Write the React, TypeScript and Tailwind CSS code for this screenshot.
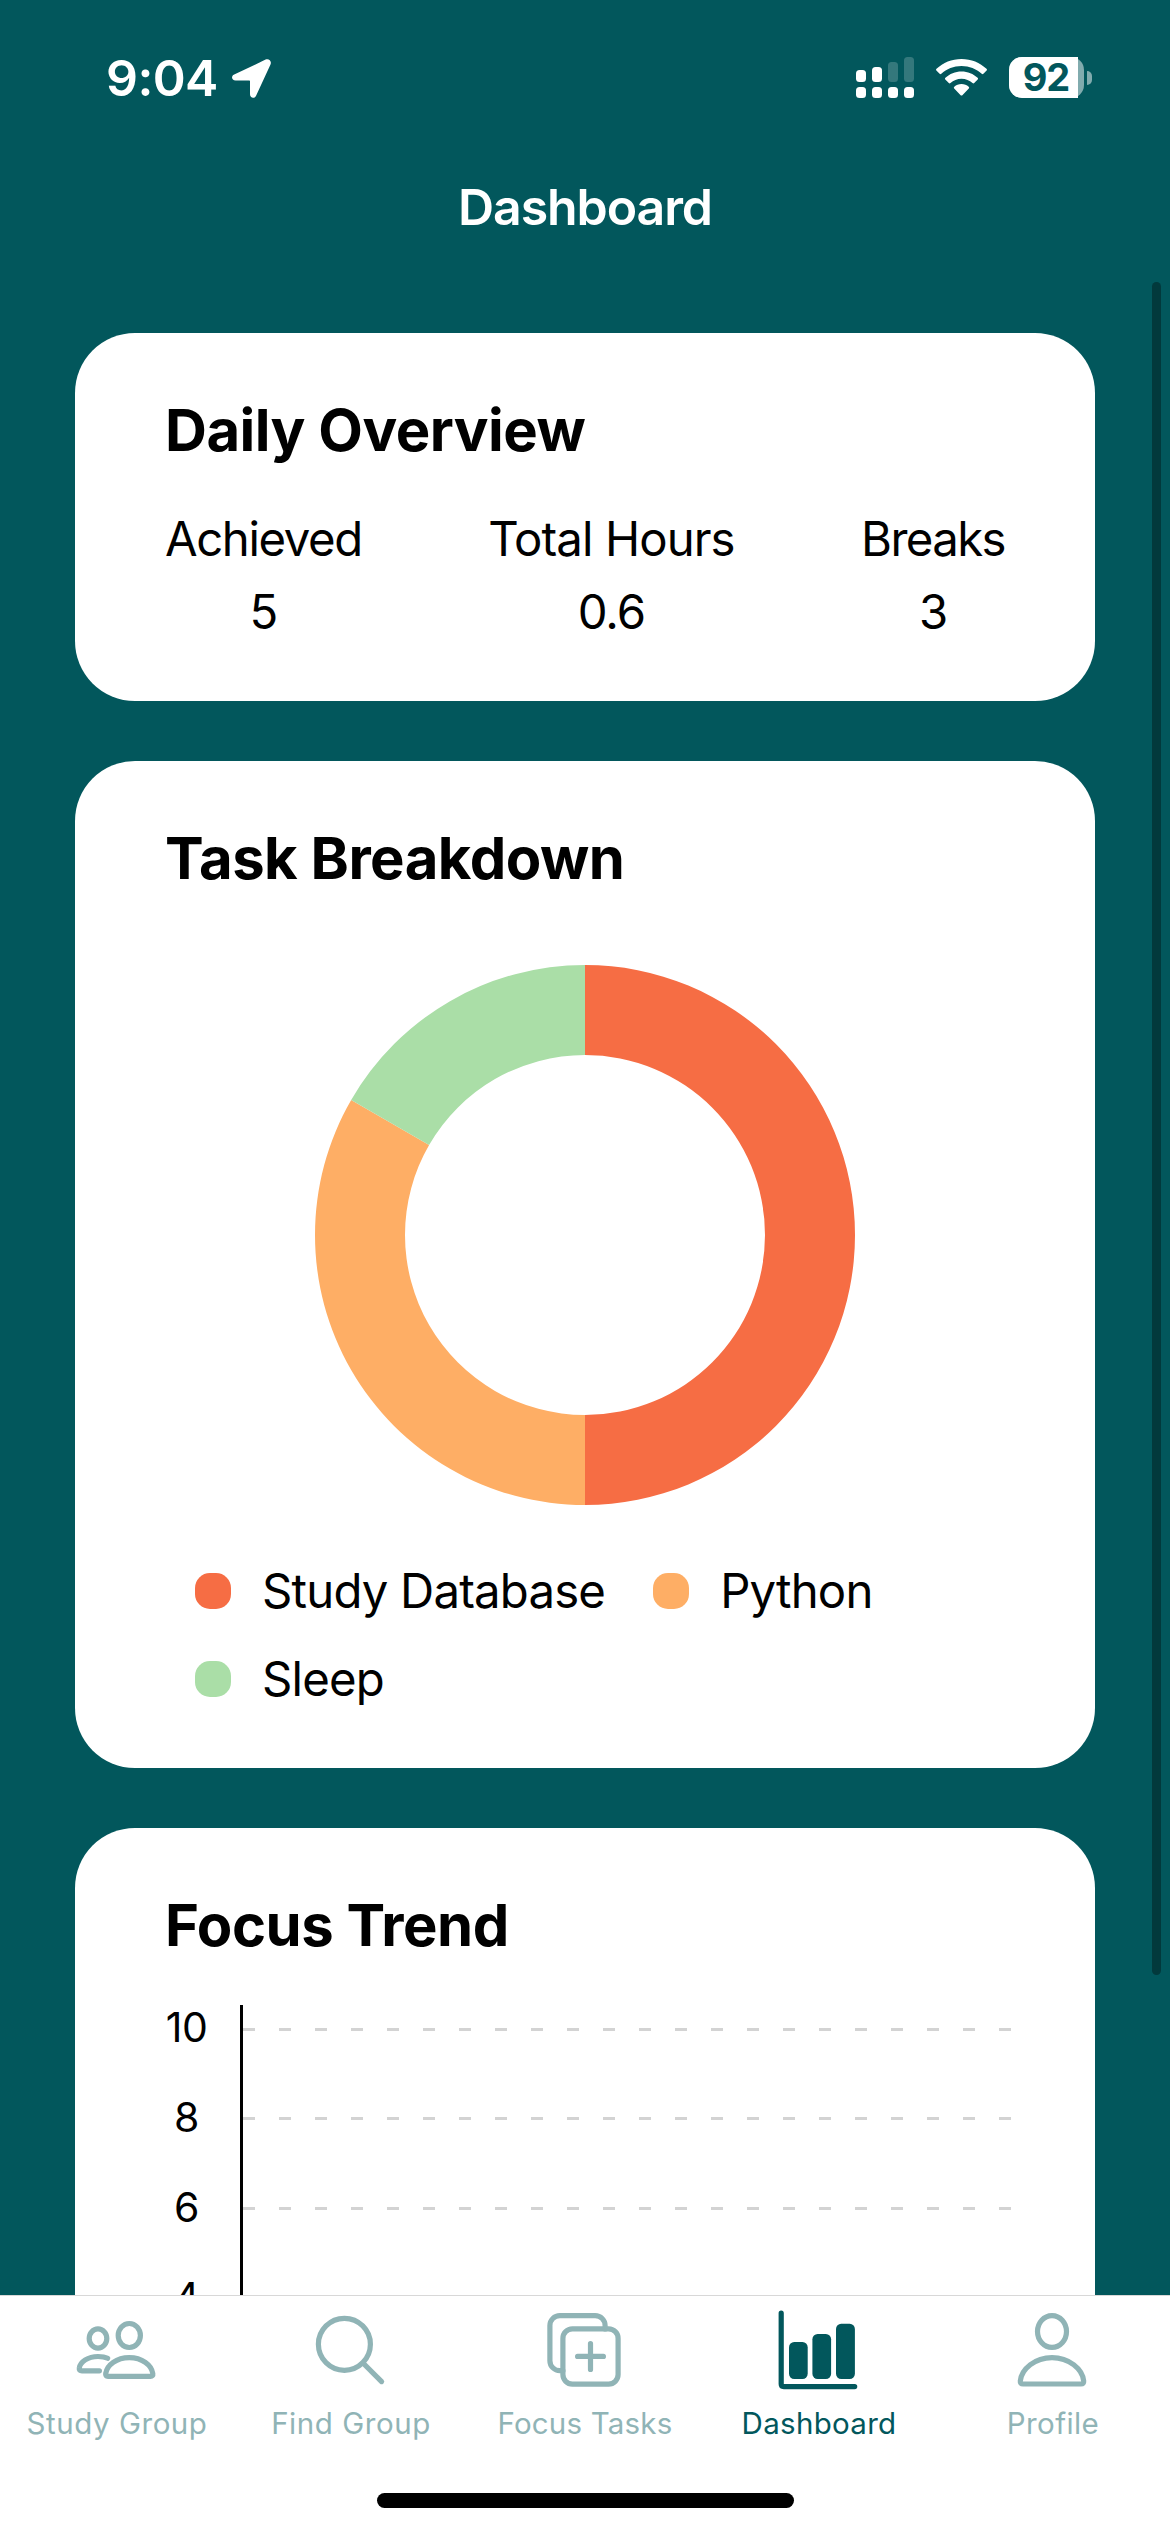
import React from "react";

const slices = [
  { label: "Study Database", color: "#f66d44", swatch: "bg-[#f66d44]", share: 3 },
  { label: "Python", color: "#feae65", swatch: "bg-[#feae65]", share: 2 },
  { label: "Sleep", color: "#aadea7", swatch: "bg-[#aadea7]", share: 1 },
];

const stats = [
  { label: "Achieved", value: "5", tracking: "tracking-[-1.4px]" },
  { label: "Total Hours", value: "0.6", tracking: "tracking-[-0.9px]" },
  { label: "Breaks", value: "3", tracking: "tracking-[-1.6px]" },
];

function StatusBar() {
  return (
    <div className="flex h-[141px] items-start justify-between pt-[50px] pr-[78px] pl-[106px] text-white">
      <div className="flex items-start">
        <span className="w-[126px] text-[50px] leading-[56px] font-semibold tracking-[-0.6px]">9:04</span>
        <svg className="mt-[9px]" width="39" height="39" viewBox="0 0 39 39" fill="currentColor">
          <path d="M2.2 15.6 33.6.6c3.200-1.500 6.400 1.600 4.900 4.900L24.200 36.500c-1.700 3.700-6.200 2.700-6.200-1.200V22.500c0-.7-.3-1-1-1H3.600C-.4 21.500-1.300 17.300 2.200 15.600Z" />
        </svg>
      </div>
      <div className="flex items-start pt-[7px]">
        <svg width="58" height="41" viewBox="0 0 58 41" fill="currentColor">
          <rect x="0" y="13" width="10" height="12" rx="3.500" />
          <rect x="16" y="10" width="10" height="15" rx="3.500" />
          <rect x="32" y="5" width="10" height="20" rx="3.500" opacity="0.2" />
          <rect x="48" y="0" width="10" height="25" rx="3.500" opacity="0.2" />
          <rect x="0" y="30" width="10" height="11" rx="3.500" />
          <rect x="16" y="30" width="10" height="11" rx="3.500" />
          <rect x="32" y="30" width="10" height="11" rx="3.500" />
          <rect x="48" y="30" width="10" height="11" rx="3.500" />
        </svg>
        <svg className="mt-[2px] ml-[22px]" width="51" height="37" viewBox="0 0 51 37" fill="currentColor">
          <path d="M25.500 0C35.200 0 44 3.700 50.500 9.800c.6.600.6 1.200.1 1.800l-3.200 3.200c-.6.600-1.200.5-1.700 0C40.400 9.900 33.300 7 25.500 7S10.600 9.900 5.300 14.800c-.5.500-1.100.6-1.700 0L.4 11.600c-.5-.6-.5-1.200.1-1.800C7 3.700 15.800 0 25.500 0Z" />
          <path d="M25.500 12.500c6.200 0 11.900 2.400 16.100 6.300.6.600.6 1.200.1 1.700l-3.500 3.500c-.5.500-1.100.5-1.700 0-2.900-2.600-6.700-4.200-11-4.200s-8.100 1.600-11 4.200c-.6.500-1.200.5-1.700 0l-3.500-3.500c-.5-.5-.5-1.100.1-1.700 4.200-3.900 9.900-6.300 16.100-6.300Z" />
          <path d="M25.500 25c2.800 0 5.300 1 7.200 2.700.6.600.6 1.200.1 1.700l-6.200 6.500c-.7.700-1.500.7-2.200 0l-6.200-6.500c-.5-.5-.5-1.100.1-1.700C20.200 26 22.700 25 25.500 25Z" />
        </svg>
        <div className="ml-[22px] flex items-center">
          <div className="flex h-[41px] w-[75px] rounded-[13px] bg-white/50">
            <div className="flex w-[69px] items-center justify-center rounded-l-[13px] bg-white pl-[5px]">
              <span className="text-[38px] leading-[41px] font-bold tracking-[-1px] text-[#02575c]">92</span>
            </div>
          </div>
          <div className="ml-[3px] h-[14px] w-[5px] rounded-r-full bg-white/50" />
        </div>
      </div>
    </div>
  );
}

function Card({ title, className = "", children }: { title: string; className?: string; children: React.ReactNode }) {
  return (
    <section className={`flex shrink-0 flex-col rounded-[60px] bg-white px-[90px] pt-[60px] ${className}`}>
      <h2 className="text-[58px] leading-[74px] font-bold tracking-[-0.5px]">{title}</h2>
      {children}
    </section>
  );
}

function Donut() {
  const total = slices.reduce((sum, s) => sum + s.share, 0);
  let from = 0;
  const point = (r: number, t: number) =>
    `${270 + r * Math.sin(2 * Math.PI * t)} ${270 - r * Math.cos(2 * Math.PI * t)}`;
  return (
    <svg className="mt-[70px] self-center" width="540" height="540" viewBox="0 0 540 540">
      {slices.map((s) => {
        const a = from;
        const b = from + s.share / total;
        from = b;
        return (
          <path
            key={s.label}
            fill={s.color}
            d={`M${point(270, a)}A270 270 0 0 1 ${point(270, b)}L${point(180, b)}A180 180 0 0 0 ${point(180, a)}Z`}
          />
        );
      })}
    </svg>
  );
}

function TrendChart() {
  return (
    <div className="flex">
      <div className="mt-[20px] w-[43px] shrink-0 text-center text-[41px] leading-[90px] tracking-[-0.5px]">
        {["10", "8", "6", "4"].map((n) => (
          <div key={n}>{n}</div>
        ))}
      </div>
      <svg className="mt-[43px] ml-[32px] shrink-0" width="771" height="540" viewBox="0 0 771 540">
        {[24.5, 113.5, 203.5, 293.5].map((y) => (
          <line key={y} x1="3" x2="771" y1={y} y2={y} stroke="#d3d3d3" strokeWidth="3" strokeDasharray="12 24" />
        ))}
        <line x1="1.500" x2="1.500" y1="0" y2="540" stroke="#000" strokeWidth="3" />
      </svg>
    </div>
  );
}

const tabs = [
  {
    label: "Study Group",
    tracking: "tracking-[0.55px]",
    icon: (
      <>
        <ellipse cx="57.300" cy="35.500" rx="11.100" ry="12" />
        <ellipse cx="26" cy="38.500" rx="8.800" ry="9.600" />
        <path d="M36 76.400H78.500Q81.200 76.400 80.800 73.500C79.500 65 70 57.600 57.300 57.600S35 65 33.700 73.500Q33.200 76.400 36 76.400Z" />
        <path d="M27.400 70.800H10Q6.800 70.800 7.300 68C8.200 61.800 16 56.500 26 56.500C30.500 56.500 33.500 57.200 35.600 58.300" />
      </>
    ),
  },
  {
    label: "Find Group",
    tracking: "tracking-[0.55px]",
    icon: (
      <>
        <circle cx="38.400" cy="44.300" r="26" />
        <path d="M57 63 75.600 81.600" />
      </>
    ),
  },
  {
    label: "Focus Tasks",
    tracking: "tracking-[0.2px]",
    icon: (
      <>
        <path d="M22.900 70.700H19.900a10 10 0 0 1-10-10V25.600a10 10 0 0 1 10-10H55.100a10 10 0 0 1 10 10V28.900" />
        <rect x="22.900" y="28.900" width="55.200" height="55.200" rx="9.500" />
        <path d="M37.600 56.400H63.400M50.500 43.500V69.400" />
      </>
    ),
  },
  {
    label: "Dashboard",
    tracking: "tracking-[0.3px]",
    active: true,
    icon: (
      <>
        <path d="M7.200 13.200V84Q7.200 86.600 9.800 86.600H80.700" />
        <g fill="currentColor" stroke="none">
          <rect x="15" y="42" width="18.700" height="37" rx="5.200" />
          <rect x="38.400" y="34" width="18.700" height="45" rx="5.200" />
          <rect x="62" y="23.700" width="18.900" height="55.300" rx="5.200" />
        </g>
      </>
    ),
  },
  {
    label: "Profile",
    tracking: "tracking-[0.4px]",
    icon: (
      <>
        <ellipse cx="44" cy="31.500" rx="14.500" ry="15.900" />
        <path d="M15 84H73Q76 84 75.700 81C74.500 69 61 57.600 44 57.600S13.500 69 12.300 81Q12 84 15 84Z" />
      </>
    ),
  },
];

function TabBar() {
  return (
    <nav className="flex h-[237px] shrink-0 flex-col items-center border-t border-[#d8d8d8] bg-white">
      <div className="grid w-full grid-cols-5 pt-[4px]">
        {tabs.map((t) => (
          <div key={t.label} className={`flex flex-col items-center ${t.active ? "text-[#02575c]" : "text-[#90b4b6]"}`}>
            <svg
              width="90"
              height="90"
              viewBox="0 0 90 90"
              fill="none"
              stroke="currentColor"
              strokeWidth="5.200"
              strokeLinecap="round"
              strokeLinejoin="round"
            >
              {t.icon}
            </svg>
            <span className={`mt-[15px] text-[29.500px] leading-[36px] whitespace-nowrap ${t.tracking}`}>{t.label}</span>
          </div>
        ))}
      </div>
      <div className="mt-[52px] h-[15px] w-[417px] rounded-full bg-black" />
    </nav>
  );
}

export default function App() {
  return (
    <div className="relative flex h-[2532px] w-[1170px] flex-col overflow-hidden bg-[#02575c] font-['Inter',sans-serif] text-black">
      <StatusBar />
      <header className="flex h-[132px] shrink-0 items-center justify-center text-white">
        <h1 className="text-[50px] leading-[60px] font-semibold tracking-[-1.1px]">Dashboard</h1>
      </header>
      <main className="flex min-h-0 flex-1 flex-col gap-[60px] overflow-hidden px-[75px] pt-[60px]">
        <Card title="Daily Overview" className="h-[368px]">
          <div className="mt-[35px] flex justify-between text-[47.300px] leading-[73px]">
            {stats.map((s) => (
              <div key={s.label} className="flex flex-col items-center">
                <span className={s.tracking}>{s.label}</span>
                <span className="tracking-[-1px]">{s.value}</span>
              </div>
            ))}
          </div>
        </Card>
        <Card title="Task Breakdown" className="h-[1007px]">
          <Donut />
          <div className="mt-[42px] ml-[30px] flex flex-wrap gap-x-[48px]">
            {slices.map((s) => (
              <div key={s.label} className="flex h-[88px] items-center gap-[31px]">
                <span className={`size-[36px] rounded-[15px] ${s.swatch}`} />
                <span className="-mt-[2px] text-[47.300px] leading-[73px] tracking-[-0.8px]">{s.label}</span>
              </div>
            ))}
          </div>
        </Card>
        <Card title="Focus Trend" className="h-[760px]">
          <TrendChart />
        </Card>
      </main>
      <TabBar />
      <div className="absolute top-[282px] right-[9px] h-[1693px] w-[9px] rounded-full bg-[#02393c]" />
    </div>
  );
}
